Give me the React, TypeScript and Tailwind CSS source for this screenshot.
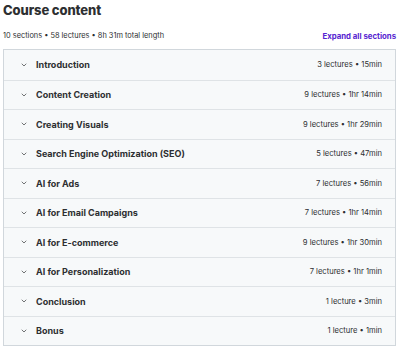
import { ChevronDown } from 'lucide-react'

interface Section {
  title: string
  meta: string
}

const sections: Section[] = [
  { title: 'Introduction', meta: '3 lectures • 15min' },
  { title: 'Content Creation', meta: '9 lectures • 1hr 14min' },
  { title: 'Creating Visuals', meta: '9 lectures • 1hr 29min' },
  { title: 'Search Engine Optimization (SEO)', meta: '5 lectures • 47min' },
  { title: 'AI for Ads', meta: '7 lectures • 56min' },
  { title: 'AI for Email Campaigns', meta: '7 lectures • 1hr 14min' },
  { title: 'AI for E-commerce', meta: '9 lectures • 1hr 30min' },
  { title: 'AI for Personalization', meta: '7 lectures • 1hr 1min' },
  { title: 'Conclusion', meta: '1 lecture • 3min' },
  { title: 'Bonus', meta: '1 lecture • 1min' },
]

export default function App() {
  return (
    <div className="w-[400px] h-[350px] bg-white text-[#2d2f31] font-['Inter',sans-serif] px-[3px]">
      <h1 className="text-[13px] font-extrabold leading-[20px] tracking-[-0.1px]">Course content</h1>
      <div className="flex items-center justify-between h-[10px] mt-[11px] mb-[8px] pr-[1px]">
        <span className="text-[7.4px] leading-[10px] text-[#2d2f31]">10 sections • 58 lectures • 8h 31m total length</span>
        <button className="text-[7.8px] leading-[10px] font-bold text-[#5624d0]">Expand all sections</button>
      </div>
      <div className="w-[393px] border border-[#d1d7dc]">
        {sections.map((s, i) => (
          <div
            key={s.title}
            className={`flex items-center justify-between h-[29.5px] bg-[#f7f9fa] pl-[16px] pr-[13px] ${i > 0 ? 'border-t border-[#dfe3e6]' : ''}`}
          >
            <div className="flex items-center gap-[8px]">
              <ChevronDown size={8} strokeWidth={2} className="text-[#2d2f31]" />
              <span className="text-[9px] font-bold">{s.title}</span>
            </div>
            <span className="text-[7.6px] text-[#2d2f31]">{s.meta}</span>
          </div>
        ))}
      </div>
    </div>
  )
}
